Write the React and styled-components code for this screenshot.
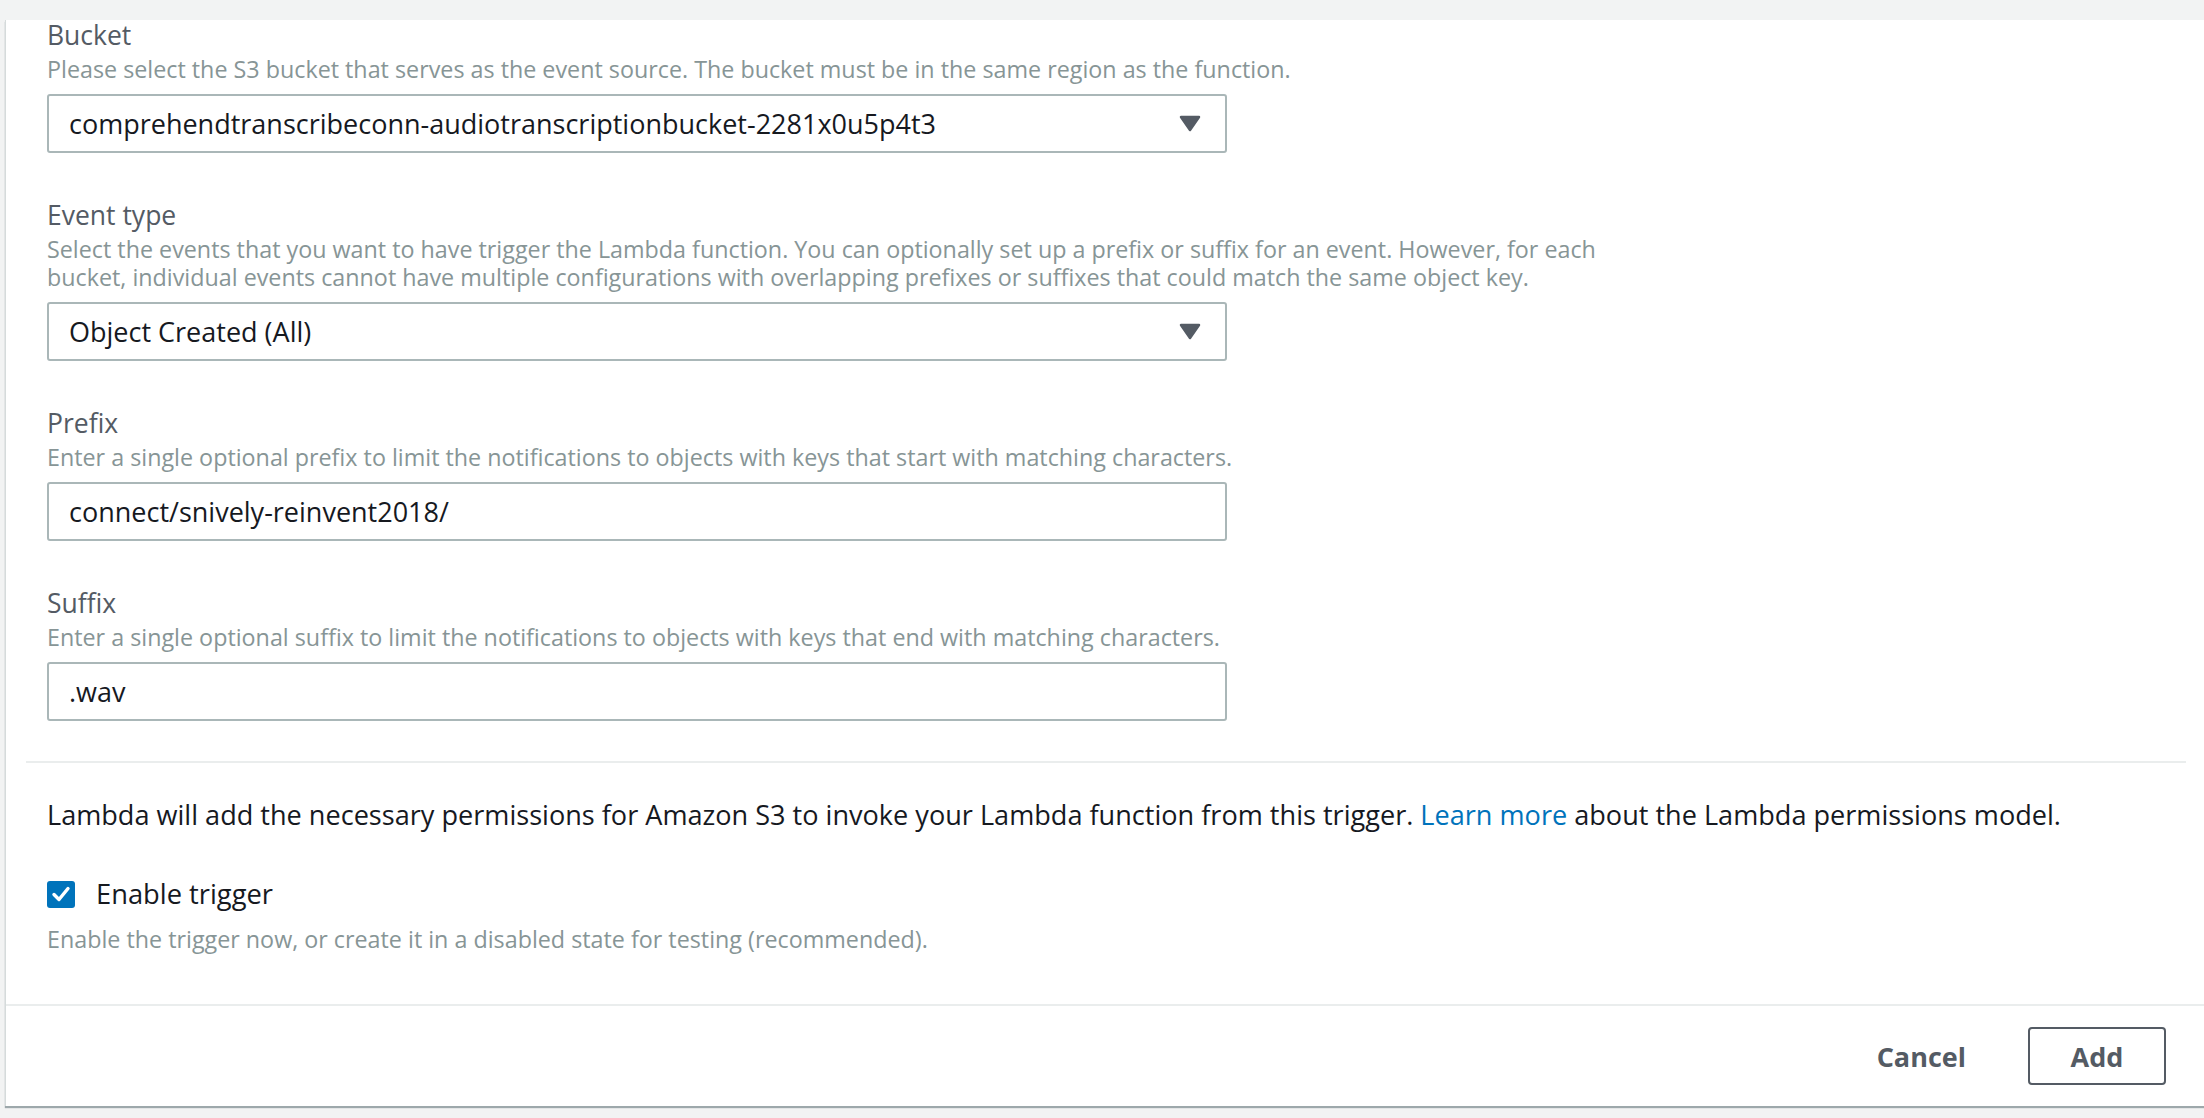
import React from 'react';
import styled, { createGlobalStyle } from 'styled-components';

const GlobalStyle = createGlobalStyle`
  html, body {
    margin: 0;
    padding: 0;
    background: #f2f3f3;
    overflow: hidden;
  }
  body {
    font-family: "Open Sans", "Noto Sans", "Liberation Sans", sans-serif;
    -webkit-font-smoothing: antialiased;
  }
`;

const Page = styled.div`
  width: 100%;
  height: 1118px;
  padding-top: 20px;
  box-sizing: border-box;
`;

const Panel = styled.div`
  margin-left: 5px;
  background: #fff;
  border-left: 1px solid #d5dbdb;
  box-shadow: 0 2px 1px rgba(0, 28, 36, 0.35);
  height: 1086px;
  box-sizing: border-box;
  display: flex;
  flex-direction: column;
`;

const Body = styled.div`
  flex: 1;
  padding: 0 18px 0 20px;
`;

const Fields = styled.div`
  padding: 0 0 40px 21px;
  border-bottom: 2px solid #eaeded;
  display: flex;
  flex-direction: column;
  gap: 47px;
`;

const Field = styled.div`
  display: flex;
  flex-direction: column;
`;

const Label = styled.div`
  font-size: 26.5px;
  line-height: 30px;
  color: #545b64;
`;

const Desc = styled.div`
  margin-top: 5px;
  font-size: 23.3px;
  line-height: 28px;
  color: #879596;
  max-width: ${(p) => p.$max || 'none'};
`;

const Box = styled.div`
  margin-top: 11px;
  width: 1180px;
  height: 59px;
  box-sizing: border-box;
  border: 2px solid #aab7b8;
  border-radius: 3px;
  display: flex;
  align-items: center;
  justify-content: space-between;
  padding: 0 24px 0 20px;
  font-size: 27px;
  color: #16191f;
  background: #fff;
`;

const Arrow = () => (
  <svg width="22" height="17" viewBox="0 0 22 17">
    <path
      d="M2 2 L20 2 L11 15 Z"
      fill="#545b64"
      stroke="#545b64"
      strokeWidth="2.5"
      strokeLinejoin="round"
    />
  </svg>
);

const Select = ({ value }) => (
  <Box>
    <span>{value}</span>
    <Arrow />
  </Box>
);

const Info = styled.div`
  padding: 35px 0 0 21px;
  display: flex;
  flex-direction: column;
`;

const Text = styled.p`
  margin: 0;
  font-size: 27.1px;
  line-height: 34px;
  color: #16191f;
  a {
    color: #0073bb;
    text-decoration: none;
  }
`;

const CheckRow = styled.label`
  margin-top: 45px;
  display: flex;
  align-items: center;
  gap: 21px;
  font-size: 27.3px;
  line-height: 34px;
  color: #16191f;
`;

const Check = styled.span`
  width: 28px;
  height: 27px;
  border-radius: 3px;
  background: #0073bb;
  display: inline-flex;
  align-items: center;
  justify-content: center;
`;

const Hint = styled.div`
  margin-top: 14px;
  font-size: 23.3px;
  line-height: 28px;
  color: #879596;
`;

const Footer = styled.div`
  border-top: 2px solid #eaeded;
  height: 102px;
  box-sizing: border-box;
  display: flex;
  align-items: center;
  justify-content: flex-end;
  gap: 50px;
  padding-right: 38px;
`;

const Button = styled.button`
  font-family: inherit;
  font-size: 27px;
  font-weight: 700;
  color: #545b64;
  background: #fff;
  cursor: pointer;
  border: ${(p) => (p.$outline ? '2px solid #545b64' : '2px solid transparent')};
  border-radius: 4px;
  height: 58px;
  min-width: ${(p) => (p.$outline ? '138px' : 'auto')};
  padding: 0 10px;
`;

export default function App() {
  return (
    <>
      <GlobalStyle />
      <Page>
        <Panel>
          <Body>
            <Fields>
              <Field>
                <Label>Bucket</Label>
                <Desc>
                  Please select the S3 bucket that serves as the event source. The bucket must be in the same region as the function.
                </Desc>
                <Select value="comprehendtranscribeconn-audiotranscriptionbucket-2281x0u5p4t3" />
              </Field>
              <Field>
                <Label>Event type</Label>
                <Desc $max="1600px">
                  Select the events that you want to have trigger the Lambda function. You can optionally set up a prefix or suffix for an event. However, for each bucket, individual events cannot have multiple configurations with overlapping prefixes or suffixes that could match the same object key.
                </Desc>
                <Select value="Object Created (All)" />
              </Field>
              <Field>
                <Label>Prefix</Label>
                <Desc>
                  Enter a single optional prefix to limit the notifications to objects with keys that start with matching characters.
                </Desc>
                <Box>connect/snively-reinvent2018/</Box>
              </Field>
              <Field>
                <Label>Suffix</Label>
                <Desc>
                  Enter a single optional suffix to limit the notifications to objects with keys that end with matching characters.
                </Desc>
                <Box>.wav</Box>
              </Field>
            </Fields>
            <Info>
              <Text>
                Lambda will add the necessary permissions for Amazon S3 to invoke your Lambda function from this trigger. <a href="#">Learn more</a> about the Lambda permissions model.
              </Text>
              <CheckRow>
                <Check>
                  <svg width="20" height="18" viewBox="0 0 20 18">
                    <path
                      d="M3 9.5 L8 14.5 L17 3.5"
                      fill="none"
                      stroke="#fff"
                      strokeWidth="3.4"
                      strokeLinecap="round"
                      strokeLinejoin="round"
                    />
                  </svg>
                </Check>
                Enable trigger
              </CheckRow>
              <Hint>Enable the trigger now, or create it in a disabled state for testing (recommended).</Hint>
            </Info>
          </Body>
          <Footer>
            <Button>Cancel</Button>
            <Button $outline>Add</Button>
          </Footer>
        </Panel>
      </Page>
    </>
  );
}
